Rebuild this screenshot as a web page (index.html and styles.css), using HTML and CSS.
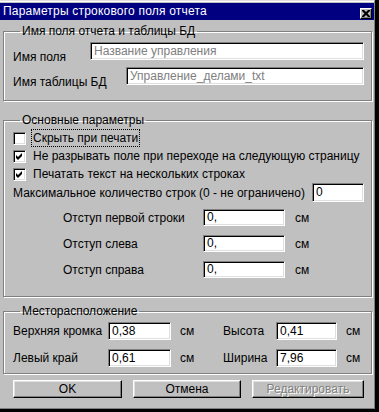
FILE: index.html
```html
<!DOCTYPE html>
<html lang="ru">
<head>
<meta charset="utf-8">
<title>Параметры строкового поля отчета</title>
<link rel="stylesheet" href="styles.css">
</head>
<body>
<div class="window">
  <div class="titlebar">
    <span class="title">Параметры строкового поля отчета</span>
    <span class="close-btn">
      <svg width="8" height="7" viewBox="0 0 8 7"><path d="M0 0h2l2 2l2-2h2v1l-2.5 2.5l2.5 2.5v1h-2l-2-2l-2 2h-2v-1l2.5-2.5l-2.5-2.5z" fill="#000"/></svg>
    </span>
  </div>
  <div class="content">
    <fieldset class="group group-names">
      <legend>Имя поля отчета и таблицы БД</legend>
      <div class="name-row">
        <span class="name-label label-field">Имя поля</span>
        <span class="field field-grow disabled">Название управления</span>
      </div>
      <div class="name-row">
        <span class="name-label label-table">Имя таблицы БД</span>
        <span class="field field-grow disabled">Управление_делами_txt</span>
      </div>
    </fieldset>

    <fieldset class="group group-main">
      <legend>Основные параметры</legend>
      <div class="check-row">
        <span class="checkbox"></span>
        <span class="check-label focused">Скрыть при печати</span>
      </div>
      <div class="check-row">
        <span class="checkbox"><svg width="9" height="9" viewBox="0 0 9 9"><polygon points="1,3 3,5 7,1 7,4 3,8 1,6" fill="#000"/></svg></span>
        <span class="check-label">Не разрывать поле при переходе на следующую страницу</span>
      </div>
      <div class="check-row">
        <span class="checkbox"><svg width="9" height="9" viewBox="0 0 9 9"><polygon points="1,3 3,5 7,1 7,4 3,8 1,6" fill="#000"/></svg></span>
        <span class="check-label">Печатать текст на нескольких строках</span>
      </div>
      <div class="max-row">
        <span>Максимальное количество строк (0 - не ограничено)</span>
        <span class="field field-max">0</span>
      </div>
      <div class="indent-row">
        <span class="indent-label">Отступ первой строки</span>
        <span class="field field-indent">0,</span>
        <span class="unit">см</span>
      </div>
      <div class="indent-row">
        <span class="indent-label">Отступ слева</span>
        <span class="field field-indent">0,</span>
        <span class="unit">см</span>
      </div>
      <div class="indent-row">
        <span class="indent-label">Отступ справа</span>
        <span class="field field-indent">0,</span>
        <span class="unit">см</span>
      </div>
    </fieldset>

    <fieldset class="group group-place">
      <legend>Месторасположение</legend>
      <div class="place-grid">
        <span>Верхняя кромка</span>
        <span class="field">0,38</span>
        <span class="unit">см</span>
        <span>Высота</span>
        <span class="field">0,41</span>
        <span class="unit">см</span>
        <span>Левый край</span>
        <span class="field">0,61</span>
        <span class="unit">см</span>
        <span>Ширина</span>
        <span class="field">7,96</span>
        <span class="unit">см</span>
      </div>
    </fieldset>

    <div class="buttons">
      <span class="button btn-ok">OK</span>
      <span class="button btn-cancel">Отмена</span>
      <span class="button btn-edit disabled-btn">Редактировать</span>
    </div>
  </div>
</div>
</body>
</html>
```

FILE: styles.css
```css
html, body {
  margin: 0;
  padding: 0;
  background: #000;
}
body {
  font-family: "Liberation Sans", Arial, sans-serif;
  font-size: 12px;
  color: #000;
  width: 379px;
  height: 412px;
  overflow: hidden;
}
.window {
  box-sizing: border-box;
  width: 375px;
  height: 409px;
  background: #c0c0c0;
  border-top: 1px solid #dfdfdf;
  border-right: 1px solid #808080;
  border-bottom: 1px solid #808080;
  box-shadow: inset 0 1px 0 #fff;
  padding-top: 2px;
}
.titlebar {
  height: 17px;
  background: #000080;
  color: #fff;
  display: flex;
  align-items: center;
  padding: 0 2px 0 3px;
}
.title {
  flex: 1;
  line-height: 17px;
  white-space: nowrap;
  letter-spacing: 0.2px;
}
.close-btn {
  box-sizing: border-box;
  width: 12px;
  height: 11px;
  margin-top: 3px;
  background: #c0c0c0;
  border-top: 1px solid #fff;
  border-left: 1px solid #fff;
  border-right: 1px solid #000;
  border-bottom: 1px solid #000;
  box-shadow: inset -1px -1px 0 #808080;
  display: flex;
  align-items: center;
  justify-content: center;
}
.close-btn svg { display: block; }
.content {
  padding: 4px 2px 0 3px;
}
.group {
  margin: 0;
  padding: 0;
  min-inline-size: 0;
  border: 1px solid #808080;
  box-shadow: inset 1px 1px 0 #fff, 1px 1px 0 #fff;
}
.group legend {
  margin-left: 7px;
  padding: 0 2px;
  line-height: 14px;
}
.group-names {
  padding: 4px 7px 15px 9px;
}
.name-row {
  display: flex;
  align-items: flex-start;
  height: 18px;
}
.name-row + .name-row {
  margin-top: 7px;
}
.name-label {
  margin-top: 8px;
  line-height: 14px;
  white-space: nowrap;
}
.label-field { width: 77px; }
.label-table { width: 113px; }
.field {
  box-sizing: border-box;
  height: 18px;
  background: #fff;
  border-top: 1px solid #808080;
  border-left: 1px solid #808080;
  border-right: 1px solid #fff;
  border-bottom: 1px solid #fff;
  box-shadow: inset 1px 1px 0 #000, inset -1px -1px 0 #dfdfdf;
  padding: 0 3px;
  line-height: 16px;
  white-space: nowrap;
  overflow: hidden;
}
.field-grow { flex: 1; }
.field.disabled { color: #808080; }

.group-main {
  margin-top: 12px;
  padding: 2px 7px 18px 9px;
}
.check-row {
  display: flex;
  align-items: center;
  height: 18px;
}
.checkbox {
  box-sizing: border-box;
  width: 13px;
  height: 13px;
  background: #fff;
  border-top: 1px solid #808080;
  border-left: 1px solid #808080;
  border-right: 1px solid #fff;
  border-bottom: 1px solid #fff;
  box-shadow: inset 1px 1px 0 #000, inset -1px -1px 0 #dfdfdf;
  padding: 1px;
  flex: none;
}
.checkbox svg { display: block; }
.check-label {
  margin-left: 5px;
  border: 1px dotted transparent;
  padding: 0 1px;
  line-height: 16px;
  white-space: nowrap;
}
.check-label.focused {
  border-color: #000;
}
.max-row {
  display: flex;
  align-items: center;
  height: 19px;
  white-space: nowrap;
}
.field-max {
  margin-left: auto;
  width: 52px;
  height: 19px;
  line-height: 17px;
}
.indent-row {
  display: flex;
  align-items: center;
  height: 17px;
  padding-left: 50px;
  margin-top: 9px;
}
.max-row + .indent-row {
  margin-top: 7px;
}
.indent-label {
  width: 140px;
  white-space: nowrap;
}
.field-indent {
  width: 82px;
  height: 17px;
  line-height: 15px;
}
.indent-row .unit {
  margin-left: 10px;
}

.group-place {
  margin-top: 7px;
  padding: 4px 7px 6px 9px;
}
.place-grid {
  display: grid;
  grid-template-columns: 95px 63px 52px 53px 61px auto;
  grid-auto-rows: 18px;
  row-gap: 9px;
  align-items: center;
  white-space: nowrap;
}
.place-grid .unit {
  padding-left: 9px;
}

.buttons {
  display: flex;
  justify-content: space-between;
  padding: 0 8px 0 10px;
  margin-top: 6px;
}
.button {
  box-sizing: border-box;
  height: 18px;
  line-height: 16px;
  text-align: center;
  background: #c0c0c0;
  border-top: 1px solid #fff;
  border-left: 1px solid #fff;
  border-right: 1px solid #000;
  border-bottom: 1px solid #000;
  box-shadow: inset -1px -1px 0 #808080, inset 1px 1px 0 #dfdfdf;
}
.btn-ok { width: 109px; }
.btn-cancel { width: 108px; }
.btn-edit { width: 112px; }
.disabled-btn {
  color: #808080;
  text-shadow: 1px 1px 0 #fff;
}
```
